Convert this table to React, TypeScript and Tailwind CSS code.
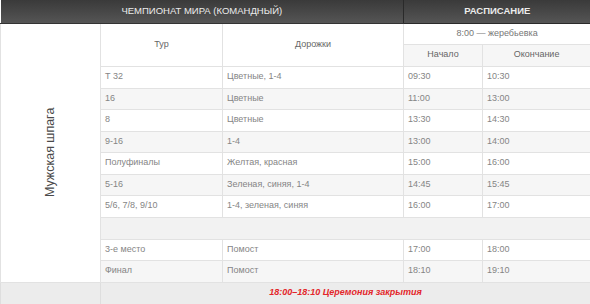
import React from 'react'

type Row = { tour: string; lanes: string; start: string; end: string }

const rows: Row[] = [
  { tour: 'Т 32', lanes: 'Цветные, 1-4', start: '09:30', end: '10:30' },
  { tour: '16', lanes: 'Цветные', start: '11:00', end: '13:00' },
  { tour: '8', lanes: 'Цветные', start: '13:30', end: '14:30' },
  { tour: '9-16', lanes: '1-4', start: '13:00', end: '14:00' },
  { tour: 'Полуфиналы', lanes: 'Желтая, красная', start: '15:00', end: '16:00' },
  { tour: '5-16', lanes: 'Зеленая, синяя, 1-4', start: '14:45', end: '15:45' },
  { tour: '5/6, 7/8, 9/10', lanes: '1-4, зеленая, синяя', start: '16:00', end: '17:00' },
]

const finals: Row[] = [
  { tour: '3-е место', lanes: 'Помост', start: '17:00', end: '18:00' },
  { tour: 'Финал', lanes: 'Помост', start: '18:10', end: '19:10' },
]

const td = 'border border-[#e2e2e2] px-[4px] text-left align-middle'

function DataRow({ row, gray, h }: { row: Row; gray: boolean; h: string }) {
  return (
    <tr className={`${h} ${gray ? 'bg-[#f6f6f6]' : 'bg-white'}`}>
      <td className={td}>{row.tour}</td>
      <td className={td}>{row.lanes}</td>
      <td className={td}>{row.start}</td>
      <td className={td}>{row.end}</td>
    </tr>
  )
}

export default function App() {
  return (
    <div className="w-[590px] h-[304px] overflow-hidden bg-white font-['Liberation_Sans',Arial,sans-serif] text-[9px] text-[#858585]">
      <table className="w-[590px] table-fixed border-collapse">
        <colgroup>
          <col className="w-[100px]" />
          <col className="w-[122px]" />
          <col className="w-[181px]" />
          <col className="w-[79px]" />
          <col className="w-[108px]" />
        </colgroup>
        <thead>
          <tr className="h-[23px] bg-gradient-to-b from-[#3a3a3a] to-[#555555] text-[#ececec] text-[9.5px]">
            <th colSpan={3} className="font-normal text-center border-b border-[#333]">
              ЧЕМПИОНАТ МИРА (КОМАНДНЫЙ)
            </th>
            <th colSpan={2} className="font-bold text-center border-l border-b border-[#2a2a2a]">
              РАСПИСАНИЕ
            </th>
          </tr>
        </thead>
        <tbody>
          <tr className="h-[21px] bg-white">
            <td rowSpan={12} className="border border-[#e2e2e2] bg-white align-middle">
              <div className="flex justify-center items-center">
                <span className="-rotate-90 whitespace-nowrap text-[12.5px] text-[#4a4a4a]">Мужская шпага</span>
              </div>
            </td>
            <td rowSpan={2} className="border border-[#e2e2e2] text-center text-[#666]">Тур</td>
            <td rowSpan={2} className="border border-[#e2e2e2] text-center text-[#666]">Дорожки</td>
            <td colSpan={2} className="border border-[#e2e2e2] text-center text-[#777]">8:00 — жеребьевка</td>
          </tr>
          <tr className="h-[22px] bg-[#f6f6f6] text-[#666]">
            <td className="border border-[#e2e2e2] text-center">Начало</td>
            <td className="border border-[#e2e2e2] text-center">Окончание</td>
          </tr>
          {rows.map((r, i) => (
            <DataRow key={r.tour} row={r} gray={i % 2 === 1} h={i % 2 === 0 ? 'h-[22px]' : 'h-[21px]'} />
          ))}
          <tr className="h-[22px] bg-[#f2f2f2]">
            <td colSpan={4} className="border border-[#e2e2e2]"></td>
          </tr>
          {finals.map((r, i) => (
            <DataRow key={r.tour} row={r} gray={i === 1} h={i === 0 ? 'h-[21px]' : 'h-[22px]'} />
          ))}
          <tr className="h-[22px] bg-[#ececec]">
            <td className="border border-[#dedede]"></td>
            <td colSpan={4} className="border border-[#dedede] text-center font-bold italic text-[#e3262a] text-[9px]">
              18:00–18:10 Церемония закрытия
            </td>
          </tr>
        </tbody>
      </table>
    </div>
  )
}
